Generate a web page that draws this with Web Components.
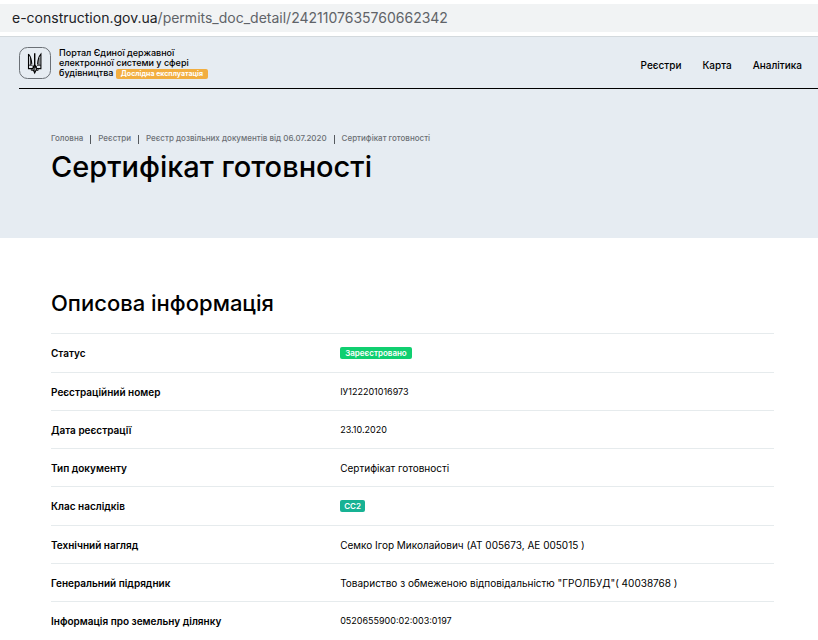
<!DOCTYPE html>
<html lang="uk">
<head>
<meta charset="UTF-8">
<meta name="viewport" content="width=device-width, initial-scale=1">
<title>Сертифікат готовності</title>
<style>
    body {
        margin: 0;
        background: #fff;
        color: #000;
        font-family: Inter, "Noto Sans", sans-serif;
        font-size: 10px;
        line-height: 12px;
    }
</style>
</head>
<body>
<address-bar host="e-construction.gov.ua" path="/permits_doc_detail/2421107635760662342"></address-bar>

<page-hero heading="Сертифікат готовності">
    <site-header slot="header">
        <site-logo slot="logo"></site-logo>
        Портал Єдиної державної<br>електронної системи у сфері<br>будівництва
        <status-badge kind="beta">Дослідна експлуатація</status-badge>
        <site-nav slot="nav"></site-nav>
    </site-header>
    <bread-crumbs slot="crumbs"></bread-crumbs>
</page-hero>

<info-section>
    <span slot="title">Описова інформація</span>
</info-section>

<script>
class AddressBar extends HTMLElement {
    connectedCallback() {
        this.attachShadow({mode: "open"}).innerHTML = `
            <style>
                :host {
                    display: block;
                    margin: 4px 0;
                    padding: 0 12px;
                    background: #f1f3f4;
                    color: #5f6368;
                    font-size: 14px;
                    line-height: 28px;
                    white-space: nowrap;
                    overflow: hidden;
                }
                .host {
                    color: #202124;
                }
            </style>
            <span class="host">${this.getAttribute("host")}</span><span>${this.getAttribute("path")}</span>`;
    }
}

class PageHero extends HTMLElement {
    connectedCallback() {
        this.attachShadow({mode: "open"}).innerHTML = `
            <style>
                :host {
                    display: block;
                    background: #e6ecf2;
                    border-top: 1px solid #d3d9dd;
                }
                .intro {
                    padding: 43px 44px 54px 51px;
                }
                h1 {
                    margin: 6px 0 0;
                    font-size: 29px;
                    line-height: 34px;
                    font-weight: 500;
                }
            </style>
            <slot name="header"></slot>
            <div class="intro">
                <slot name="crumbs"></slot>
                <h1>${this.getAttribute("heading")}</h1>
            </div>`;
    }
}

class SiteHeader extends HTMLElement {
    connectedCallback() {
        this.attachShadow({mode: "open"}).innerHTML = `
            <style>
                :host {
                    display: block;
                }
                header {
                    display: flex;
                    align-items: center;
                    gap: 8px;
                    margin-left: 19px;
                    padding: 10px 16px 9px 0;
                    border-bottom: 1px solid #000;
                }
                .name {
                    flex: 1;
                    font-size: 9px;
                    font-weight: 500;
                    line-height: 10px;
                }
            </style>
            <header>
                <slot name="logo"></slot>
                <div class="name"><slot></slot></div>
                <slot name="nav"></slot>
            </header>`;
    }
}

class SiteLogo extends HTMLElement {
    connectedCallback() {
        this.attachShadow({mode: "open"}).innerHTML = `
            <style>
                :host {
                    display: block;
                }
                svg {
                    display: block;
                }
            </style>
            <svg width="32" height="32" viewBox="0 0 32 32" fill="none" stroke="#000" role="img" aria-label="Тризуб">
                <rect x="0.5" y="0.5" width="31" height="31" rx="8" stroke="#6b7076"/>
                <path d="M9.5 7V21.6H13.6L15.7 26L17.8 21.6H21.9V7C19.6 9.6 18.8 12.4 18.6 17.4M9.5 7C11.8 9.6 12.6 12.4 12.8 17.4" stroke-width="1.1"/>
                <path d="M15.7 6.2V17.6L13.8 21.6M15.7 17.6L17.6 21.6" stroke-width="1.4"/>
                <path d="M9.5 18.2H12.8L14.6 20H16.8L18.6 18.2H21.9M11.4 11V18.2M20 11V18.2M12.3 21.6V23.4H14.2M19.1 21.6V23.4H17.2M15.7 20V25" stroke-width="0.8"/>
            </svg>`;
    }
}

class SiteNav extends HTMLElement {
    connectedCallback() {
        const links = ["Реєстри", "Карта", "Аналітика"];
        this.attachShadow({mode: "open"}).innerHTML = `
            <style>
                :host {
                    display: block;
                }
                nav {
                    display: flex;
                    gap: 21px;
                    padding-top: 4px;
                }
                a {
                    color: inherit;
                    font-weight: 500;
                    text-decoration: none;
                }
            </style>
            <nav>${links.map(text => `<a href="#">${text}</a>`).join("")}</nav>`;
    }
}

class BreadCrumbs extends HTMLElement {
    connectedCallback() {
        const crumbs = ["Головна", "Реєстри", "Реєстр дозвільних документів від 06.07.2020", "Сертифікат готовності"];
        const last = crumbs.pop();
        this.attachShadow({mode: "open"}).innerHTML = `
            <style>
                :host {
                    display: block;
                    color: #6c7075;
                    font-size: 8px;
                    line-height: 12px;
                    font-weight: 500;
                }
                ol {
                    display: flex;
                    align-items: center;
                    margin: 0;
                    padding: 0;
                    list-style: none;
                }
                li {
                    display: flex;
                    align-items: center;
                }
                li + li::before {
                    content: "";
                    width: 1px;
                    height: 9px;
                    margin: 2px 7px 0;
                    background: #55595e;
                }
                a {
                    color: inherit;
                    text-decoration: none;
                }
            </style>
            <ol>
                ${crumbs.map(text => `<li><a href="#">${text}</a></li>`).join("")}
                <li>${last}</li>
            </ol>`;
    }
}

class StatusBadge extends HTMLElement {
    connectedCallback() {
        this.attachShadow({mode: "open"}).innerHTML = `
            <style>
                :host {
                    display: inline-block;
                    padding: 0 5px;
                    border-radius: 2px;
                    background: #10cf70;
                    color: #fff;
                    font-size: 8px;
                    line-height: 12px;
                    font-weight: 600;
                }
                :host([kind="class"]) {
                    padding: 0 4px;
                    background: #17b294;
                }
                :host([kind="beta"]) {
                    background: #f2ae40;
                    font-size: 7px;
                    line-height: 10px;
                    font-weight: 700;
                }
            </style>
            <slot></slot>`;
    }
}

class InfoSection extends HTMLElement {
    #rows = [
        ["Статус", "<status-badge>Зареєстровано</status-badge>"],
        ["Реєстраційний номер", `<span class="number">ІУ122201016973</span>`],
        ["Дата реєстрації", `<span class="number">23.10.2020</span>`],
        ["Тип документу", "Сертифікат готовності"],
        ["Клас наслідків", `<status-badge kind="class">СС2</status-badge>`],
        ["Технічний нагляд", "Семко Ігор Миколайович (АТ 005673, АЕ 005015 )"],
        ["Генеральний підрядник", `Товариство з обмеженою відповідальністю "ГРОЛБУД"( 40038768 )`],
        ["Інформація про земельну ділянку", `<span class="number">0520655900:02:003:0197</span>`]
    ];

    connectedCallback() {
        this.attachShadow({mode: "open"}).innerHTML = `
            <style>
                :host {
                    display: block;
                    padding: 52px 44px 0 51px;
                }
                h2 {
                    margin: 0 0 17px;
                    font-size: 22px;
                    line-height: 26px;
                    font-weight: 500;
                }
                table {
                    width: 100%;
                    border-collapse: separate;
                    border-spacing: 0;
                    table-layout: fixed;
                }
                th, td {
                    padding: 13px 0 12px;
                    border-top: 1px solid #e6ebed;
                    text-align: left;
                    vertical-align: top;
                    font-weight: 400;
                }
                th {
                    width: 40%;
                    font-weight: 600;
                }
                .number {
                    display: block;
                    font-size: 9px;
                }
                status-badge {
                    display: block;
                    width: fit-content;
                    margin-bottom: 1px;
                }
            </style>
            <h2><slot name="title"></slot></h2>
            <table>
                ${this.#rows.map(([name, value]) => `<tr><th scope="row">${name}</th><td>${value}</td></tr>`).join("")}
            </table>`;
    }
}

customElements.define("address-bar", AddressBar);
customElements.define("page-hero", PageHero);
customElements.define("site-header", SiteHeader);
customElements.define("site-logo", SiteLogo);
customElements.define("site-nav", SiteNav);
customElements.define("bread-crumbs", BreadCrumbs);
customElements.define("status-badge", StatusBadge);
customElements.define("info-section", InfoSection);
</script>
</body>
</html>
